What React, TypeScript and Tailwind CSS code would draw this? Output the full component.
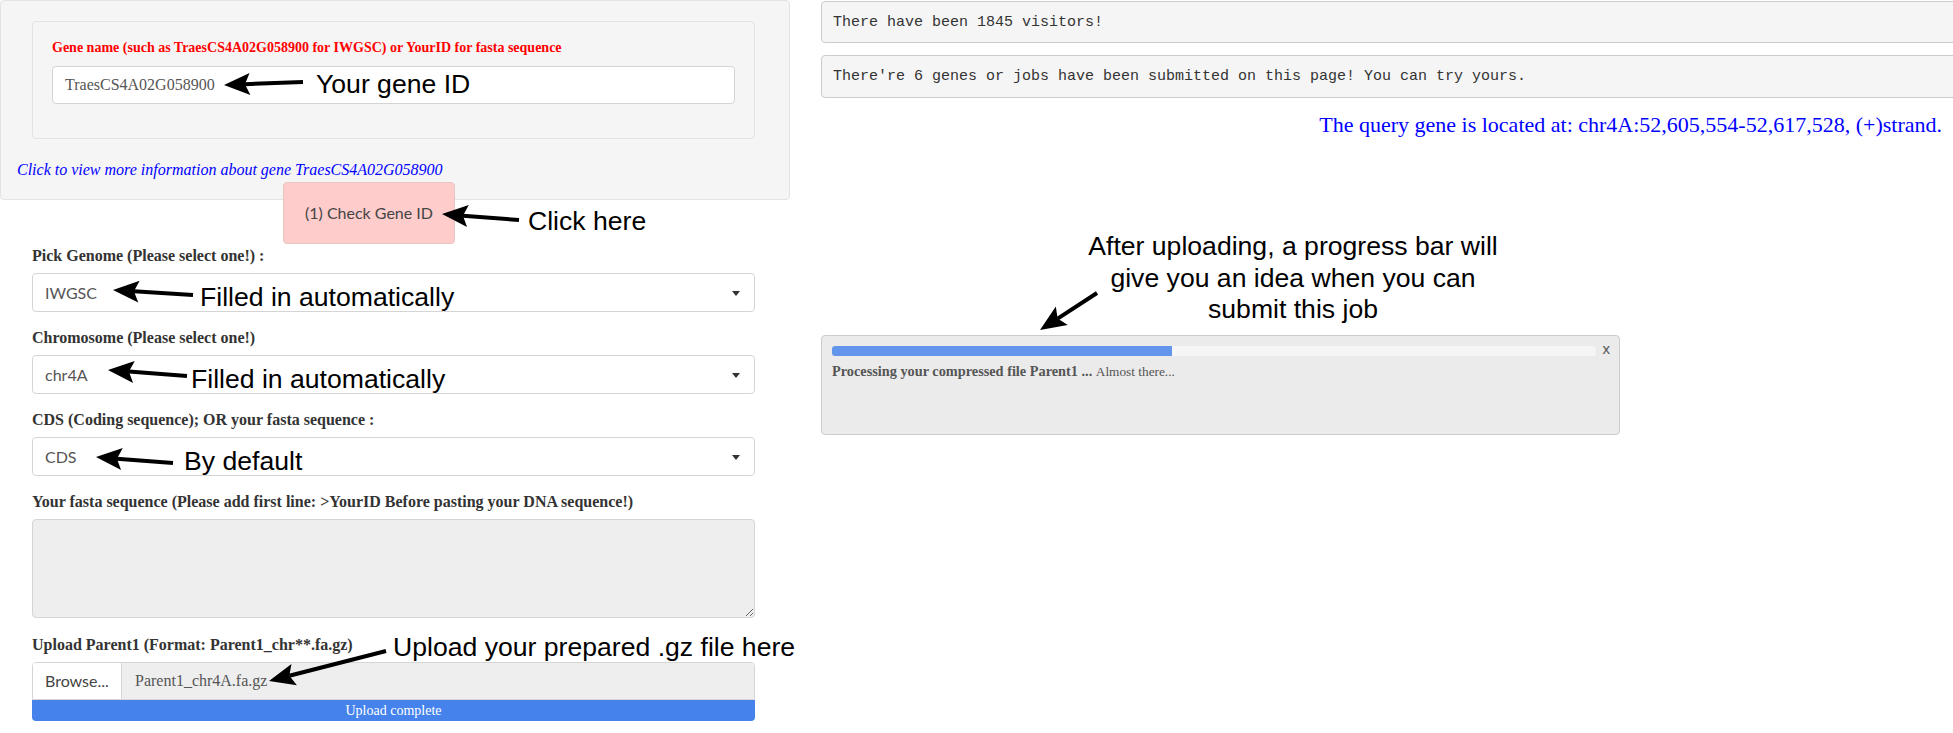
const arrows = [
  [303, 82, 224, 85],
  [519, 220, 442, 214],
  [193, 295, 113, 290],
  [187, 376, 108, 370],
  [173, 463, 96, 457],
  [386, 651, 269, 681],
  [1097, 293, 1040, 330],
];

const Arrow = ({ a }: { a: number[] }) => {
  const [x1, y1, x2, y2] = a;
  const len = Math.hypot(x2 - x1, y2 - y1);
  const dx = (x2 - x1) / len;
  const dy = (y2 - y1) / len;
  const px = -dy;
  const py = dx;
  const L = 26;
  const W = 11;
  const bx = x2 - dx * L;
  const by = y2 - dy * L;
  const nx = x2 - dx * (L - 5);
  const ny = y2 - dy * (L - 5);
  const pts = [
    [x2, y2],
    [bx + px * W, by + py * W],
    [nx, ny],
    [bx - px * W, by - py * W],
  ]
    .map((p) => p.join(","))
    .join(" ");
  return (
    <g>
      <line x1={x1} y1={y1} x2={nx} y2={ny} stroke="#000" strokeWidth={4} />
      <polygon points={pts} fill="#000" />
    </g>
  );
};

const Caret = () => (
  <svg width="8" height="5" viewBox="0 0 8 5" className="absolute right-[14px] top-[17px]">
    <path d="M0 0 L8 0 L4 5 Z" fill="#333" />
  </svg>
);

const FakeSelect = ({ value }: { value: string }) => (
  <div className="relative h-[39px] bg-white border border-[#d5d5d5] rounded-[4px] flex items-center pl-[12px] font-['Lato'] text-[16px] text-[#555]">
    {value}
    <Caret />
  </div>
);

const Label = ({ children }: any) => (
  <div className="font-bold text-[16px] leading-[20px] text-[#333] mb-[7px]">{children}</div>
);

const Note = ({ text, cls }: { text: string; cls: string }) => (
  <div className={`absolute whitespace-nowrap font-['Liberation_Sans'] text-[26.6px] leading-[27px] text-black ${cls}`}>
    {text}
  </div>
);

export default function App() {
  return (
    <div className="relative w-[1953px] h-[733px] overflow-hidden bg-white font-['Liberation_Serif',serif]">
      <div className="flex">
        {/* left column */}
        <div className="w-[790px] shrink-0">
          <div className="bg-[#f5f5f5] border border-[#e3e3e3] rounded-[4px] pt-[20px] pb-[17px]">
            <div className="ml-[31px] mr-[34px] bg-[#f5f5f5] border border-[#e3e3e3] rounded-[4px] px-[19px] pt-[16px] pb-[34px]">
              <div className="text-[#ff0000] font-bold text-[14px] leading-[20px] mb-[8px]">
                Gene name (such as TraesCS4A02G058900 for IWGSC) or YourID for fasta sequence
              </div>
              <div className="h-[38px] bg-white border border-[#d5d5d5] rounded-[4px] flex items-center pl-[12px] text-[16px] text-[#555]">
                TraesCS4A02G058900
              </div>
            </div>
            <div className="mt-[19px] ml-[16px] italic text-[16px] leading-[24px] text-[#0000ff]">
              Click to view more information about gene TraesCS4A02G058900
            </div>
          </div>
          <div className="relative -mt-[18px] ml-[283px] w-[172px] h-[62px] bg-[#ffcccc] border border-[#e8c4c4] rounded-[4px] flex items-center justify-center font-['Lato'] text-[16px] text-[#444]">
            (1) Check Gene ID
          </div>

          <div className="ml-[32px] w-[723px] mt-[2px]">
            <Label>Pick Genome (Please select one!) :</Label>
            <FakeSelect value="IWGSC" />
            <div className="h-[16px]" />
            <Label>Chromosome (Please select one!)</Label>
            <FakeSelect value="chr4A" />
            <div className="h-[16px]" />
            <Label>CDS (Coding sequence); OR your fasta sequence :</Label>
            <FakeSelect value="CDS" />
            <div className="h-[16px]" />
            <Label>Your fasta sequence (Please add first line: &gt;YourID Before pasting your DNA sequence!)</Label>
            <textarea className="block w-full h-[99px] bg-[#eeeeee] border border-[#d5d5d5] rounded-[4px]" readOnly />
            <div className="h-[17px]" />
            <Label>Upload Parent1 (Format: Parent1_chr**.fa.gz)</Label>
            <div className="flex h-[38px] border border-[#d5d5d5] rounded-t-[4px] overflow-hidden">
              <div className="w-[89px] bg-white border-r border-[#d5d5d5] flex items-center pl-[12px] font-['Lato'] text-[16px] text-[#444]">
                Browse...
              </div>
              <div className="flex-1 bg-[#eeeeee] flex items-center pl-[13px] text-[16px] text-[#555]">
                Parent1_chr4A.fa.gz
              </div>
            </div>
            <div className="h-[21px] bg-[#4582ec] rounded-b-[4px] flex items-center justify-center text-white text-[14px]">
              Upload complete
            </div>
          </div>
        </div>

        {/* right column */}
        <div className="ml-[31px] w-[1132px] shrink-0">
          <div className="mt-[1px] w-[1160px] bg-[#f5f5f5] border border-[#cccccc] rounded-[4px] px-[11px] py-[9.5px] font-['Liberation_Mono'] text-[15px] leading-[21.4px] text-[#333]">
            There have been 1845 visitors!
          </div>
          <div className="mt-[12px] w-[1160px] bg-[#f5f5f5] border border-[#cccccc] rounded-[4px] px-[11px] py-[9.5px] font-['Liberation_Mono'] text-[15px] leading-[21.4px] text-[#333]">
            There&apos;re 6 genes or jobs have been submitted on this page! You can try yours.
          </div>
          <div className="mt-[12.6px] pr-[11px] text-right text-[22px] leading-[30px] text-[#0000ff]">
            The query gene is located at: chr4A:52,605,554-52,617,528, (+)strand.
          </div>
          <div className="relative mt-[195px] w-[799px] h-[100px] bg-[#ebebeb] border border-[#cccccc] rounded-[4px] pl-[10px] pt-[10px]">
            <div className="w-[764px] h-[10px] bg-[#f5f5f5] rounded-[3px] overflow-hidden">
              <div className="w-[340px] h-full bg-[#6495ed]" />
            </div>
            <div className="absolute right-[9px] top-[2px] font-['Liberation_Sans'] text-[15px] text-[#555]">x</div>
            <div className="mt-[5px] text-[14.3px] leading-[20px] text-[#555]">
              <span className="font-bold">Processing your compressed file Parent1 ...</span>{" "}
              <span className="text-[13.3px]">Almost there...</span>
            </div>
          </div>
        </div>
      </div>

      {/* annotations */}
      <svg className="absolute left-0 top-0 pointer-events-none" width="1953" height="733">
        {arrows.map((a, i) => (
          <Arrow a={a} key={i} />
        ))}
      </svg>
      <Note text="Your gene ID" cls="left-[316px] top-[71px]" />
      <Note text="Click here" cls="left-[528px] top-[208px]" />
      <Note text="Filled in automatically" cls="left-[200px] top-[284px]" />
      <Note text="Filled in automatically" cls="left-[191px] top-[366px]" />
      <Note text="By default" cls="left-[184px] top-[448px]" />
      <Note text="Upload your prepared .gz file here" cls="left-[393px] top-[634px]" />
      <div className="absolute left-[1043px] top-[231px] w-[500px] whitespace-nowrap text-center font-['Liberation_Sans'] text-[26.6px] leading-[31.5px] text-black">
        After uploading, a progress bar will
        <br />
        give you an idea when you can
        <br />
        submit this job
      </div>
    </div>
  );
}
